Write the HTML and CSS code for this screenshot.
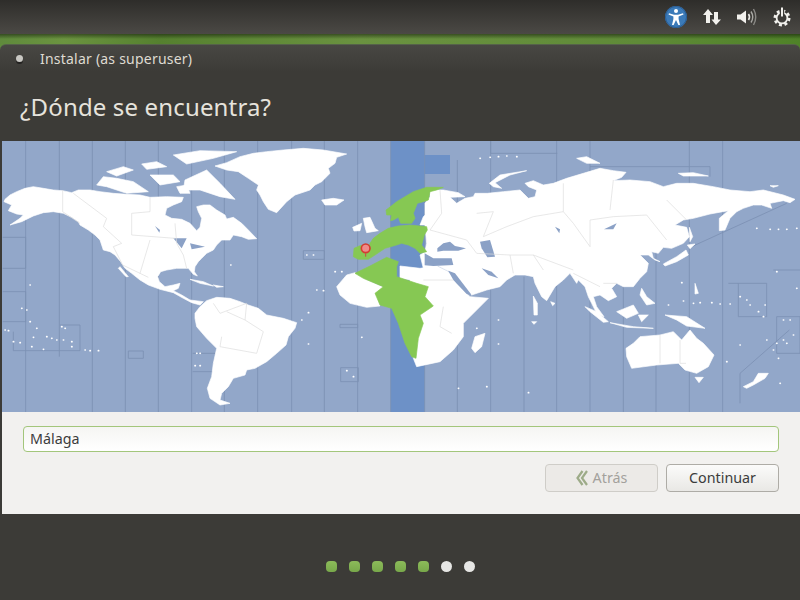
FILE: index.html
```html
<!DOCTYPE html>
<html lang="es">

<head>
  <meta charset="UTF-8">
  <meta name="viewport" content="width=device-width, initial-scale=1.0">
  <title>Instalar</title>
  <link rel="stylesheet" href="styles.css">
</head>

<body>
  <!-- top panel -->
  <header class="panel">
    <svg class="tray-icon" width="24" height="24" viewBox="0 0 24 24">
      <circle cx="12" cy="12" r="11" fill="#3b7ab8" />
      <circle cx="12" cy="12" r="10.5" fill="none" stroke="#2a5d94" />
      <circle cx="12" cy="6" r="2" fill="#fff" />
      <path d="M5 8.2 L10 9.8 H14 L19 8.2 L19.5 9.6 L14.6 11.6 V14 L16 20 H14.4 L12 15 L9.6 20 H8 L9.4 14 V11.6 L4.5 9.6 Z" fill="#fff" />
    </svg>
    <svg class="tray-icon" width="22" height="22" viewBox="0 0 22 22">
      <path d="M7 3 L12 9 H9 V17 H5 V9 H2 Z" fill="#f2f1ed" />
      <path d="M15 19 L10.5 13.5 H13 V6 H17 V13.5 H20 Z" fill="#f2f1ed" />
    </svg>
    <svg class="tray-icon" width="24" height="22" viewBox="0 0 24 22">
      <path d="M2 8.5 H5.5 L11 4.5 V17.5 L5.5 13.5 H2 Z" fill="#f2f1ed" />
      <path d="M13.5 8 Q15.5 11 13.5 14" fill="none" stroke="#e8e7e3" stroke-width="1.6" />
      <path d="M16 5.5 Q19.5 11 16 16.5" fill="none" stroke="#a9a8a4" stroke-width="1.4" />
      <path d="M18.5 3 Q23 11 18.5 19" fill="none" stroke="#8a8985" stroke-width="1.4" />
    </svg>
    <svg class="tray-icon" width="22" height="22" viewBox="0 0 22 22">
      <circle cx="11" cy="12" r="7" fill="none" stroke="#f2f1ed" stroke-width="3" stroke-dasharray="2.9 2.6" />
      <circle cx="11" cy="12" r="5.4" fill="none" stroke="#f2f1ed" stroke-width="1.8" />
      <rect x="8.8" y="3" width="4.4" height="7" fill="#3a3935" />
      <rect x="10" y="1.5" width="2" height="9" fill="#f2f1ed" />
    </svg>
  </header>

  <div class="wallpaper"></div>

  <main class="window">
    <div class="titlebar">
      <span class="close-dot"></span>
      <span class="window-title">Instalar (as superuser)</span>
    </div>

    <h1 class="heading">¿Dónde se encuentra?</h1>

    <!-- coordinates are 3x screen pixels -->
    <svg class="map" width="798" height="271" viewBox="6 3 2394 813" preserveAspectRatio="none">
      <rect x="0" y="0" width="2400" height="820" fill="#92a7c9" />
      <path class="band" d="M1172 0 H1274 V45 H1350 V102 H1274 V816 H1172 Z" />

      <g class="zone-lines">
        <path d="M77 0 V816 M178 0 V650 M277 0 V816 M376 0 V816 M475 0 V816 M575 0 V816 M673 0 V816 M773 0 V816 M875 0 V816 M973 0 V816 M1073 0 V816 M1172 0 V816" />
        <path d="M1274 0 V816 M1372 60 V816 M1472 0 V816 M1572 410 V816 M1670 0 V816 M1770 0 V816 M1870 420 V816 M1968 270 V816 M2068 0 V816 M2168 0 V816" />
        <path d="M8 292 H77 V385 H8 M8 455 H77 V545 H8 M40 575 V632 H240 V555 H180 M385 633 H430 V655 H385 Z M578 640 H650 V695 H578 M910 332 H973 V358 H910 Z M1020 553 H1073 V563 H1020 Z M1022 683 H1075 V725 H1022 Z" />
        <path d="M2075 320 L2360 190 M2185 430 H2300 V530 H2215 V430 M2320 390 H2400 M2330 530 H2400 V640 H2330 Z" />
        <path d="M2368 570 L2220 700 V790 M1472 0 V40 H1672 M1770 80 H2130 V110" />
      </g>

      <g class="land">
        <!-- north america -->
        <polygon points="15,178 30,165 50,155 75,145 100,140 130,145 160,150 188,152 215,158 235,150 270,150 300,155 340,160 380,163 420,165 450,172 500,170 550,172 545,185 520,195 500,205 495,225 515,235 545,238 570,250 590,272 600,262 605,235 595,215 590,200 610,195 630,195 650,210 675,225 680,237 700,232 725,250 745,270 770,296 745,298 725,290 700,285 690,300 665,300 650,315 640,330 620,340 605,355 595,365 585,380 583,395 592,408 580,403 565,385 530,385 500,390 482,395 473,410 478,425 495,440 520,435 540,430 535,445 520,452 545,465 570,480 610,485 600,495 575,488 550,475 520,458 480,448 445,435 420,420 395,400 375,385 362,365 345,345 330,335 310,330 300,300 285,285 265,270 240,255 235,245 215,232 190,220 160,215 130,218 100,228 65,245 30,255 60,235 70,225 50,222 25,212 35,195 12,185" />
        <polygon points="360,380 385,410 378,410 355,385" />
        <!-- arctic islands -->
        <polygon points="290,135 310,110 350,115 400,125 445,155 380,160 320,140" />
        <polygon points="320,95 370,80 400,90 350,108" />
        <polygon points="425,72 470,65 500,80 440,88" />
        <polygon points="520,45 600,32 710,35 640,55 560,72" />
        <polygon points="450,105 520,105 540,125 480,135" />
        <polygon points="555,120 620,90 660,130 705,178 660,170 600,150 550,150" />
        <polygon points="530,140 560,135 570,160 540,160" />
        <!-- greenland iceland britain -->
        <polygon points="645,78 680,68 720,50 760,40 800,35 850,30 910,25 970,30 1040,42 1010,52 1005,70 985,85 990,100 965,125 945,135 930,150 885,165 860,185 830,218 805,208 790,185 780,165 770,150 775,135 745,115 715,95 680,90" />
        <polygon points="965,180 1000,175 1032,180 1010,195 975,195" />
        <polygon points="1090,235 1110,232 1125,265 1135,272 1100,278 1095,260" />
        <polygon points="1058,262 1085,250 1080,272 1062,273" />
        <!-- south america -->
        <polygon points="585,520 600,500 620,482 650,472 690,475 720,485 745,495 775,505 800,525 850,535 890,548 885,565 865,590 858,615 830,640 800,665 765,685 740,690 735,705 700,715 685,740 665,760 660,780 690,790 660,795 630,775 622,745 635,710 640,670 650,625 620,595 590,560 585,535" />
        <polygon points="570,418 610,425 640,438 600,430" />
        <polygon points="640,435 670,440 650,442" />
        <!-- africa west -->
        <polygon points="1010,440 1040,405 1065,398 1095,418 1150,442 1127,460 1140,498 1100,502 1050,490 1020,465" />

        <g transform="translate(1200 0)">
          <!-- eurasia -->
          <polygon points="75,190 90,170 90,150 130,150 175,158 195,170 150,172 170,190 195,175 220,170 225,160 262,160 310,155 360,150 370,160 385,175 405,170 410,150 385,140 375,130 400,122 430,135 460,130 500,115 550,100 600,85 640,92 678,97 665,112 640,122 690,120 750,125 790,140 830,130 880,130 940,140 990,150 1050,155 1090,150 1150,165 1185,178 1170,188 1150,182 1110,190 1115,205 1085,195 1060,195 1030,205 1010,215 990,235 975,270 958,272 958,235 985,212 930,222 880,235 850,240 825,255 860,262 868,290 850,310 815,325 790,322 775,340 755,335 760,355 780,365 765,360 745,345 720,345 745,370 740,395 720,415 700,440 670,440 650,430 635,445 650,470 625,482 600,465 580,470 590,500 612,530 590,520 575,490 565,470 555,440 535,420 530,430 510,400 490,420 465,440 440,482 425,470 405,430 400,410 375,405 345,405 320,420 300,440 260,450 215,465 190,445 170,425 150,395 115,378 70,385 60,345 75,335 80,310 75,255 60,255 70,230 75,225" />
          <!-- africa east -->
          <polygon points="0,378 60,385 110,378 145,395 170,430 210,470 265,475 230,510 190,550 190,590 160,630 120,665 50,680 40,655 30,600 30,420 0,415" />
          <polygon points="215,625 225,590 255,580 245,620 225,638" />
          <!-- oceania -->
          <polygon points="678,625 700,610 720,590 780,585 820,575 845,600 870,570 890,595 910,610 942,645 925,680 890,700 855,690 835,670 770,675 695,685 680,650" />
          <polygon points="1030,740 1060,725 1075,700 1105,700 1095,715 1060,735 1040,745" />
          <polygon points="885,712 910,712 897,728" />
          <!-- japan and islands -->
          <polygon points="790,372 830,350 858,330 865,345 830,365 795,378" />
          <polygon points="862,315 885,312 870,326" />
          <polygon points="868,262 878,290 870,305" />
          <polygon points="555,500 590,515 625,545 610,547 570,515" />
          <polygon points="630,548 700,560 760,565 680,562" />
          <polygon points="650,515 700,495 715,520 680,535" />
          <polygon points="715,525 745,525 725,545" />
          <polygon points="795,525 860,530 915,565 860,558 830,540" />
          <polygon points="725,445 740,470 765,490 740,495 720,465" />
          <polygon points="452,485 465,490 458,497" />
          <polygon points="268,130 300,105 380,92 330,105 285,128 305,145 280,140" />
          <polygon points="530,55 560,50 600,70 560,70" />
          <polygon points="835,100 880,98 925,108 850,108" />
          <polygon points="1110,137 1135,137 1120,142" />
          <polygon points="885,430 895,460 885,462" />
          <polygon points="400,468 412,490 412,525 402,525" />
          <polygon points="395,545 410,545 402,553" />
          <path class="dots" d="M1020 470h1M1040 480h1M1050 495h1M1095 495h1M1075 515h1M1090 530h1M1100 600h1M1130 610h1M1150 600h1M1160 610h1M1170 540h1M1150 540h1M1180 585h1M1120 630h1M1135 655h1M1020 615h1M980 665h1M805 495h1M850 483h1M880 490h1M900 488h1M935 488h1M960 492h1M990 492h1M845 428h1M1130 395h1M1190 445h1M295 540h1M295 612h1M230 565h1M175 745h1M260 740h1M385 758h1M1140 730h1M1070 265h1M1110 268h1M1135 268h1M1160 268h1M1190 265h1M240 55h1M270 52h1M295 50h1M320 48h1M350 50h1" />
        </g>

        <!-- pacific islands -->
        <path class="dots" d="M65 505h1M80 510h1M90 545h1M110 565h1M15 570h1M25 572h1M40 605h1M60 608h1M100 592h1M95 620h1M130 628h1M140 590h1M155 595h1M170 600h1M190 600h1M215 605h1M185 560h1M195 565h1M215 620h1M255 630h1M270 632h1M295 632h1M90 435h1M692 375h1M590 640h1M600 640h1M585 677h1M600 677h1M925 612h1M905 540h1M925 518h1M950 450h1M970 452h1M920 345h1M940 345h1M1005 395h1M1025 395h1M1040 692h1M1060 710h1M1085 592h1" />
      </g>

      <!-- seas inside the land -->
      <g class="water" transform="translate(1200 0)">
        <polygon points="112,325 130,310 150,305 165,318 198,325 175,332 130,332 112,335" />
        <polygon points="240,305 270,300 285,350 262,352 245,325" />
        <polygon points="74,340 100,355 155,355 160,375 100,378 74,376" />
        <polygon points="145,392 165,400 215,465 200,462 160,420" />
        <polygon points="245,385 275,395 295,415 265,405" />
        <polygon points="612,268 650,250 640,268" />
        <polygon points="465,260 480,268 478,280" />
      </g>
      <g class="water">
        <polygon points="520,295 560,295 545,325" />
        <polygon points="570,310 615,320 575,328" />
        <polygon points="465,258 480,270 478,278" />
      </g>

      <!-- selected time zone -->
      <g class="zone" transform="translate(990 120)">
        <polygon points="168,90 175,85 200,65 225,50 250,35 290,22 340,22 320,30 300,35 295,60 280,65 262,70 250,100 255,115 245,130 225,130 212,130 205,112 190,120 182,122 185,105 170,105" />
        <polygon points="120,190 130,175 150,160 175,145 205,138 240,135 290,140 292,150 283,165 275,195 290,215 270,220 255,205 235,195 215,190 200,195 165,205 135,225 115,238 85,238 70,230 72,205 90,197 120,195" />
        <polygon points="75,280 120,258 170,232 205,245 200,260 200,290 260,310 295,320 285,350 310,378 270,405 280,430 265,475 258,535 245,530 225,490 205,430 185,385 150,375 135,340 160,320 100,295" />
      </g>

      <g class="borders">
        <path d="M188 150 V215 L240 250 M220 160 L320 235 L310 260 L365 310 L340 320 L368 375 L420 400 L445 412 M395 285 V220 L450 215 V172 M395 285 L525 295 M450 300 L420 400 M525 250 L530 310 L550 345 L560 385" />
        <path d="M640 490 L660 520 L740 490 L735 540 L790 575 L770 640 L660 620 L665 590 M735 540 L680 515" />
        <g transform="translate(1200 0)">
          <path d="M120 150 L125 220 L90 270 L200 300 L230 340 L330 345 L400 345 L520 390 M230 220 L280 215 L250 290 L320 260 L400 230 L490 215 L520 250 L570 320 L570 240 L640 230 L740 225 L800 300 M640 120 L630 210 M490 130 L490 215 M800 180 L860 240" />
          <path d="M330 345 L340 400 M400 345 L430 390 M520 400 L600 440 M610 430 L650 430 M780 585 V670 M840 600 V670 L858 670 M70 420 H160 M130 500 L120 560 L155 580" />
        </g>
      </g>

      <path d="M1097 340 V350" stroke="#c44" stroke-width="3" />
      <circle class="pin" cx="1097" cy="325" r="13" />
    </svg>

    <div class="location">
      <input class="city" type="text" value="Málaga" readonly>
      <div class="buttons">
        <button class="btn btn-back" type="button" disabled>
          <svg width="12" height="16" viewBox="0 0 12 16">
            <path d="M6.5 1 L1.5 8 L6.5 15 M11 1 L6 8 L11 15" fill="none" stroke="#9dab88" stroke-width="2.2" />
          </svg>
          Atrás
        </button>
        <button class="btn" type="button">Continuar</button>
      </div>
    </div>
  </main>

  <footer class="progress">
    <span class="step step-done"></span>
    <span class="step step-done"></span>
    <span class="step step-done"></span>
    <span class="step step-done"></span>
    <span class="step step-done"></span>
    <span class="step"></span>
    <span class="step"></span>
  </footer>
</body>
</html>
```

FILE: styles.css
```css
body {
  display: flex;
  flex-direction: column;
  width: 800px;
  height: 600px;
  margin: 0;
  overflow: hidden;
  background-color: #3c3b37;
  font-family: "Noto Sans", "Open Sans", sans-serif;
}

.panel {
  display: flex;
  justify-content: flex-end;
  align-items: center;
  gap: 12px;
  height: 34px;
  padding-right: 7px;
  background: linear-gradient(#2e2d2a, #4b4945);
}

.tray-icon:first-child {
  margin-right: 1px;
}

.wallpaper {
  height: 16px;
  background:
    linear-gradient(rgba(0, 0, 0, 0.45), rgba(0, 0, 0, 0) 5px),
    linear-gradient(90deg, #5f8a3c 0, #6b9440 8%, #55802f 20%, #6a9240 45%, #5f8a38 80%, #4f8228 100%);
}

.window {
  display: flex;
  flex-direction: column;
  margin-top: -6px;
}

.titlebar {
  display: flex;
  align-items: center;
  gap: 17px;
  height: 28px;
  padding-left: 16px;
  border-radius: 6px 6px 0 0;
  border-top: 1px solid #55624a;
  box-sizing: border-box;
  background: linear-gradient(#484743, #3c3b37);
}

.close-dot {
  width: 7px;
  height: 7px;
  border-radius: 50%;
  background-color: #c9c8c3;
  box-shadow: 0 2px 0 #232220;
}

.window-title {
  color: #dfdbd2;
  font-size: 14px;
  letter-spacing: 0.22px;
}

.heading {
  height: 69px;
  margin: 0;
  padding-left: 20px;
  color: #e6e3dc;
  font-size: 24px;
  font-weight: normal;
  letter-spacing: 0.15px;
  line-height: 70px;
  box-sizing: border-box;
}

.map {
  display: block;
  margin-left: 2px;
  filter: blur(0.4px);
}

.band {
  fill: #6d91c7;
}

.zone-lines path {
  fill: none;
  stroke: #7c90b3;
  stroke-width: 2.5;
}

.land polygon {
  fill: #fff;
  stroke: #fff;
  stroke-width: 2;
  stroke-linejoin: round;
}

.dots {
  fill: none;
  stroke: #fff;
  stroke-width: 5;
  stroke-linecap: round;
}

.water polygon {
  fill: #8ba1c6;
}

.zone polygon {
  fill: #86c853;
  stroke: #86c853;
  stroke-width: 2;
  stroke-linejoin: round;
}

.borders path {
  fill: none;
  stroke: #dcdcdc;
  stroke-width: 2;
}

.pin {
  fill: #f08a8a;
  stroke: #d43c32;
  stroke-width: 5;
}

.location {
  display: flex;
  flex-direction: column;
  gap: 12px;
  height: 102px;
  margin-left: 2px;
  padding: 14px 21px 0;
  box-sizing: border-box;
  background-color: #f2f1ef;
}

.city {
  height: 26px;
  padding: 0 6px 1px;
  border: 1px solid #a3c67b;
  border-radius: 4px;
  box-sizing: border-box;
  background: linear-gradient(#f5f5f3, #fff);
  color: #3c3c3c;
  font-family: inherit;
  font-size: 14.3px;
  outline: none;
}

.buttons {
  display: flex;
  justify-content: flex-end;
  gap: 8px;
}

.btn {
  display: flex;
  justify-content: center;
  align-items: center;
  gap: 5px;
  width: 113px;
  height: 28px;
  padding: 0 0 1px;
  border: 1px solid #aeaca6;
  border-radius: 4px;
  background: linear-gradient(#fbfbfa, #e9e8e5);
  color: #3c3c3c;
  font-family: inherit;
  font-size: 14.3px;
}

.btn-back {
  border-color: #cfcdc8;
  background: #eceae7;
  color: #a3a19c;
}

.progress {
  display: flex;
  justify-content: center;
  align-items: center;
  gap: 12px;
  flex: 1;
  padding-top: 18px;
  box-sizing: border-box;
}

.step {
  width: 11px;
  height: 11px;
  border-radius: 50%;
  background-color: #e6e6e4;
}

.step-done {
  border-radius: 4px;
  background: linear-gradient(#8cbb5a, #78a84a);
}
```
